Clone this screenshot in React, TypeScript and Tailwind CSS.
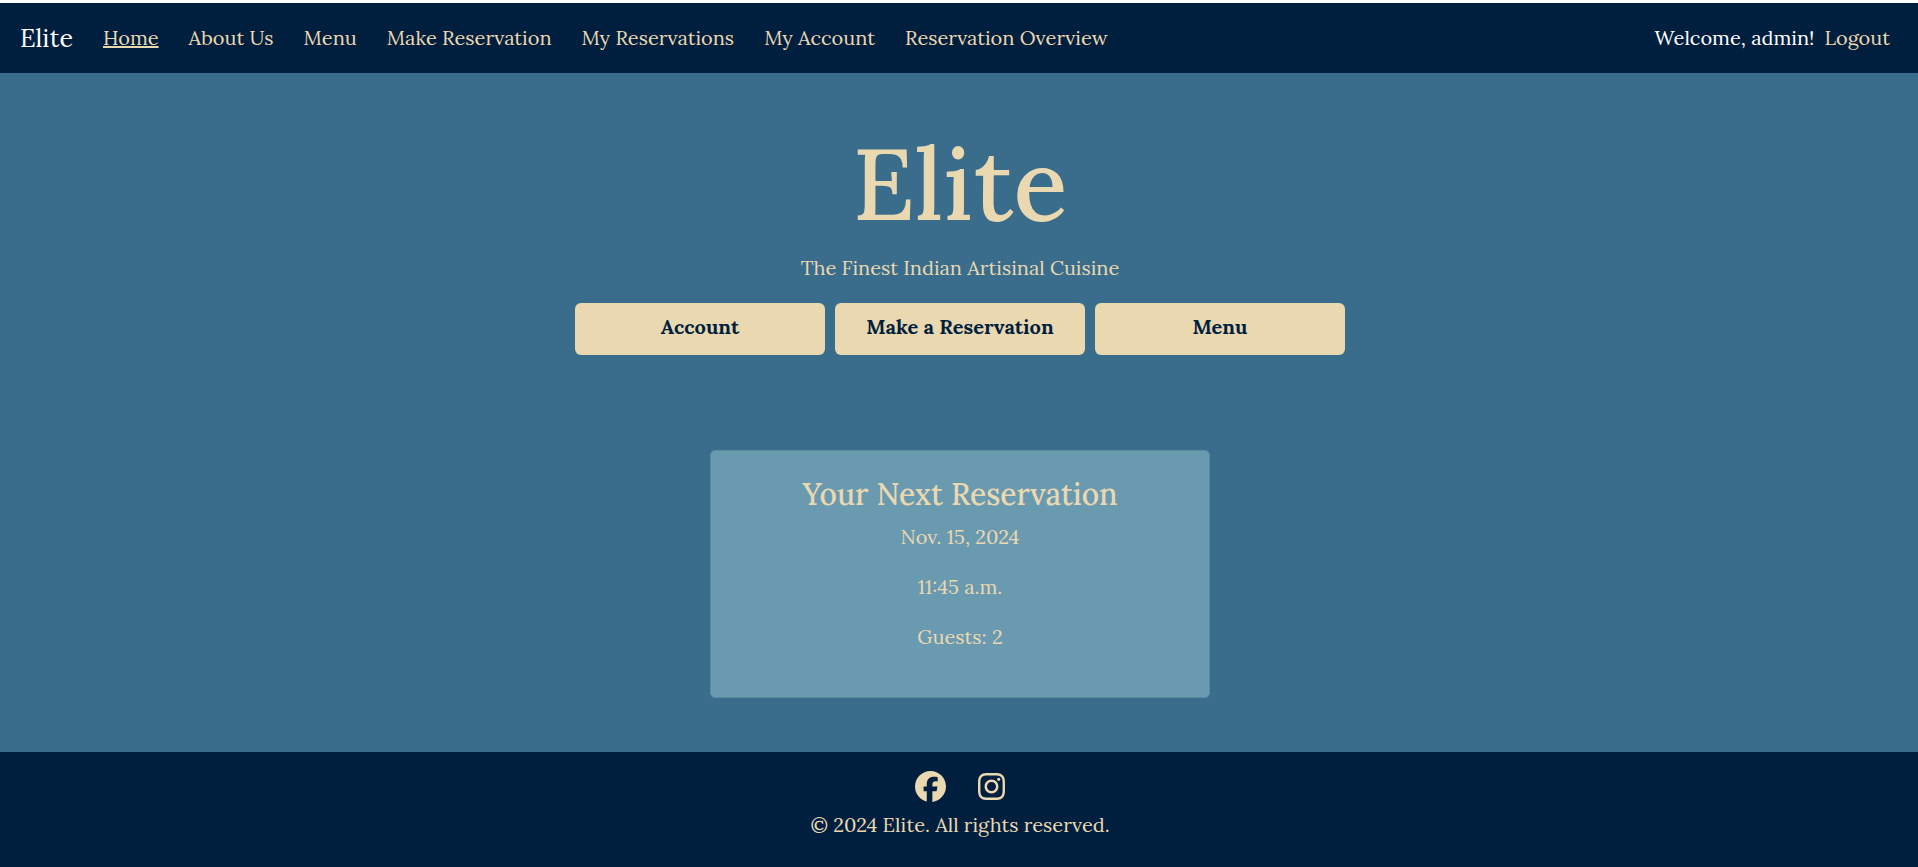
import { FaFacebook, FaInstagram } from "react-icons/fa6";

const links = [
  "Home",
  "About Us",
  "Menu",
  "Make Reservation",
  "My Reservations",
  "My Account",
  "Reservation Overview",
];

const actions = ["Account", "Make a Reservation", "Menu"];

function Navbar() {
  return (
    <nav className="flex h-[70px] items-center bg-[#001f3f] pr-[28px] pl-5">
      <a href="#" className="mr-[30px] text-[25px] text-white">
        Elite
      </a>
      <ul className="flex gap-[30px] whitespace-nowrap">
        {links.map((label) => (
          <li key={label}>
            <a href="#" className={label === "Home" ? "underline" : ""}>
              {label}
            </a>
          </li>
        ))}
      </ul>
      <div className="ml-auto flex gap-2.5 whitespace-nowrap">
        <span className="text-white">Welcome, admin!</span>
        <a href="#">Logout</a>
      </div>
    </nav>
  );
}

function ReservationCard() {
  return (
    <section className="mt-[95px] h-[248px] w-[500px] rounded-[5px] border border-[#5c8ba2] bg-[#6a9ab0] pt-[25px]">
      <h2 className="mb-2.5 text-[30px] leading-[36px] font-medium">Your Next Reservation</h2>
      <div className="flex flex-col gap-5">
        <p>Nov. 15, 2024</p>
        <p>11:45 a.m.</p>
        <p>Guests: 2</p>
      </div>
    </section>
  );
}

export default function App() {
  return (
    <div className="flex h-[867px] flex-col bg-[#3a6d8c] font-['Lora','Liberation_Serif',serif] text-[20px] leading-[30px] text-[#ead8b1]">
      <div className="h-[3px] bg-white" />
      <Navbar />
      <main className="flex flex-1 flex-col items-center pt-[50px] pl-[2px] text-center">
        <h1 className="text-[100px] leading-[120px] font-medium">Elite</h1>
        <p className="mt-2.5">The Finest Indian Artisinal Cuisine</p>
        <div className="mt-5 flex gap-2.5">
          {actions.map((label) => (
            <button
              key={label}
              className="h-[52px] w-[250px] rounded-md bg-[#ead8b1] pb-[5px] font-bold text-[#001f3f]"
            >
              {label}
            </button>
          ))}
        </div>
        <ReservationCard />
      </main>
      <footer className="flex h-[115px] flex-col items-center bg-[#001f3f] pt-[19px] pl-[2px]">
        <div className="flex gap-8">
          <FaFacebook className="h-[31px] w-[31px]" />
          <FaInstagram className="h-[31px] w-[27px]" />
        </div>
        <p className="mt-2">© 2024 Elite. All rights reserved.</p>
      </footer>
    </div>
  );
}
